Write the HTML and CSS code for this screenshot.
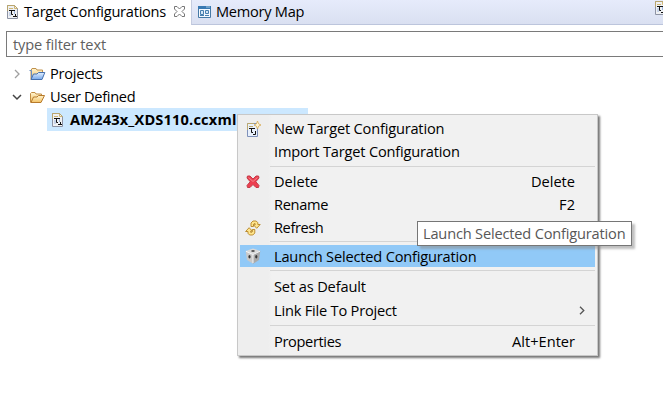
FILE: index.html
```html
<!DOCTYPE html>
<html lang="en">
<head>
<meta charset="utf-8">
<title>Target Configurations</title>
<link rel="stylesheet" href="styles.css">
</head>
<body>
<svg width="0" height="0" class="defs" aria-hidden="true">
  <defs>
    <linearGradient id="gold" x1="0" y1="0" x2="0" y2="1"><stop offset="0" stop-color="#fff3cf"/><stop offset="1" stop-color="#f3c264"/></linearGradient>
    <linearGradient id="blue" x1="0" y1="0" x2="0" y2="1"><stop offset="0" stop-color="#e4f1ff"/><stop offset="1" stop-color="#78a9ec"/></linearGradient>
    <symbol id="config" viewBox="0 0 12 16">
      <path d="M.5 1.5H7.5L10.5 4.5V14.5H.5Z" fill="#eef0f3" stroke="#8d93a4"/>
      <path d="M.5 7V1.5H7.5L10.5 4.5" fill="none" stroke="#b9a56c"/>
      <path d="M2 4.5H6M7.5 2V4.5H10" fill="none" stroke="#d0b775"/>
      <path d="M2 6.5H8M4.5 6V10.5H6M6 12.5H8.5V10M8 12.5H10" fill="none" stroke="#111"/>
      <path d="M3 8V12M7.5 7V10" stroke="#9eb6df"/>
    </symbol>
  </defs>
</svg>
<main class="view">
  <header class="tabs">
    <div class="tab active">
      <svg class="doc" width="12" height="16"><use href="#config"/></svg>
      <span class="label l-target">Target Configurations</span>
      <svg class="close" width="11" height="11" viewBox="0 0 11 11"><path d="M.5.5H3L5.5 3 8 .5H10.5V3L8 5.5 10.5 8V10.5H8L5.5 8 3 10.5H.5V8L3 5.5.5 3Z" fill="#fff" stroke="#777"/></svg>
    </div>
    <div class="tab inactive">
      <svg class="map" width="13" height="12" viewBox="0 0 13 12"><path d="M.5.5H12.5V11.5H.5Z" fill="#f5f9ff" stroke="#467aa6"/><path d="M0 1.5H13" stroke="#3979b2" stroke-width="3"/><path d="M8 1H12" stroke="#a9c9e2"/><path d="M2.5 4.5H5.5V8.5H2.5ZM7.5 4.5H10.5V7.5H7.5ZM2 9.5H6M7 9.5H11" fill="#d6e6f5" stroke="#477faf"/></svg>
      <span class="label l-memory">Memory Map</span>
      <svg class="doc end" width="12" height="16"><use href="#config"/></svg>
    </div>
  </header>
  <div class="filter"><span class="l-filter">type filter text</span></div>
  <section class="tree">
    <div class="row">
      <svg class="arrow" width="12" height="10" viewBox="0 0 12 10"><path d="M4 1 8 5 4 9" fill="none" stroke="#a0a0a0" stroke-width="1.3"/></svg>
      <svg class="folder" width="17" height="14" viewBox="0 0 17 14"><path d="M2 12.5V3.5L3 1.5H7L8 3H13.5V7" fill="url(#gold)" stroke="#bf914c"/><path d="M.5 3.5H2.5V11" fill="none" stroke="#6a8dbf"/><path d="M2 12.5 4.5 7H8L9.5 5.5H15.8L13 12.5Z" fill="url(#blue)" stroke="#4670ae"/></svg>
      <span class="l-projects">Projects</span>
    </div>
    <div class="row">
      <svg class="arrow" width="12" height="10" viewBox="0 0 12 10"><path d="M2 3 6 7 10 3" fill="none" stroke="#444" stroke-width="1.5"/></svg>
      <svg class="folder" width="17" height="14" viewBox="0 0 17 14"><path d="M1.5 12.5V3.5L2.5 2.5H6L7 4H12.5V7" fill="url(#gold)" stroke="#c28d43"/><path d="M2 12.5 4.5 7H8L9.5 5.5H15.5L12 12.5Z" fill="url(#gold)" stroke="#b77a2b"/></svg>
      <span class="l-user">User Defined</span>
    </div>
    <div class="row selected">
      <svg class="doc" width="12" height="16"><use href="#config"/></svg>
      <span class="l-file">AM243x_XDS110.ccxml</span>
    </div>
  </section>
</main>
<nav class="menu">
  <div class="item"><svg class="icon" width="16" height="16" viewBox="0 0 16 16"><path d="M2.5 2.5H12.5V15.5H2.5Z" fill="#e8f0fc" stroke="#7e91ba"/><path d="M2.5 9V2.5H9M4 5.5H8" fill="none" stroke="#bca96f"/><path d="M4 7.5H10M6.5 7V11.5H8M8 13.5H10.5V10" fill="none" stroke="#111"/><path d="M12.5 0 13.6 2.9 16 4 13.6 5.1 12.5 8 11.4 5.1 9 4 11.4 2.9Z" fill="#fff6d7" stroke="#d5a850" stroke-width=".8"/></svg><span class="l-new">New Target Configuration</span></div>
  <div class="item"><span class="l-new">Import Target Configuration</span></div>
  <div class="sep"></div>
  <div class="item"><svg class="icon" width="16" height="16" viewBox="0 0 16 16"><path d="M2 4 2.5 2H5L8 5 11 2H13.5L14 4 10.8 7.7 14 11.5 13.5 13.5H11L8 10.5 5 13.5H2.5L2 11.5 5.2 7.7Z" fill="#ed3f50" stroke="#c43c49"/><path d="M3.5 3.5 8 7.5 12.5 3.5" fill="none" stroke="#f2868b"/></svg><span>Delete</span><span class="key">Delete</span></div>
  <div class="item"><span class="l-rename">Rename</span><span class="key">F2</span></div>
  <div class="item"><svg class="icon" width="16" height="16" viewBox="0 0 16 16"><g id="turn"><path d="M6 6.5V3L8 1H11.2L12.8 2.7V4.5H15.2L11.7 8.3 8.4 4.8H10.2V3.7H9L8.5 4.5V6.5Z" fill="#ffe58d" stroke="#b58425" stroke-width=".9"/></g><use href="#turn" transform="rotate(180 7.9 8)"/></svg><span class="l-refresh">Refresh</span></div>
  <div class="sep tight"></div>
  <div class="item hot"><svg class="icon" width="16" height="16" viewBox="0 0 16 16"><path d="M8 .5 15.3 3 8 6.5.7 3Z" fill="#d9d9d9"/><path d="M.7 3 8 6.5V15.8L2 12Z" fill="#c9c9c9"/><path d="M8 6.5 15.3 3 14 12 8 15.8Z" fill="#aaa"/><path d="M1 3.3 8 6.5 15 3.2M8 6.5V15" fill="none" stroke="#f4f4f4"/><ellipse cx="8" cy="3" rx="1.8" ry=".9" fill="#555"/><ellipse cx="4.5" cy="8.8" rx="1.1" ry="1.7" fill="#383838"/><ellipse cx="11.3" cy="8.8" rx="1.1" ry="1.7" fill="#383838"/></svg><span class="l-new">Launch Selected Configuration</span></div>
  <div class="sep wide"></div>
  <div class="item"><span class="l-set">Set as Default</span></div>
  <div class="item link"><span class="l-link">Link File To Project</span><svg class="more" width="6" height="9" viewBox="0 0 6 9"><path d="M1 .7 4.8 4.5 1 8.3" fill="none" stroke="#555" stroke-width="1.3"/></svg></div>
  <div class="sep"></div>
  <div class="item last"><span class="l-properties">Properties</span><span class="key">Alt+Enter</span></div>
</nav>
<div class="tooltip"><span class="l-new">Launch Selected Configuration</span></div>
</body>
</html>
```
FILE: styles.css
```css
* { box-sizing: border-box; }
body { margin: 0; width: 663px; height: 406px; overflow: hidden; position: relative; background: #fff; color: #000; font: 14.6px/23px "Open Sans", "Noto Sans", sans-serif; white-space: nowrap; }
svg { display: block; flex: none; }
.defs { position: absolute; }
.tabs { display: flex; height: 25px; }
.tab { display: flex; align-items: center; height: 25px; }
.active { width: 191px; padding: 0 0 2px 7px; }
.active .label { width: 142px; margin-left: 5px; }
.close { margin-left: 8px; }
.inactive { flex: 1; padding: 0 0 1px 6px; background: linear-gradient(#e6ebfb, #dae0f1); border-left: 1px solid #c5cce0; border-bottom: 1px solid #bcc5dc; }
.map { margin-right: 5px; }
.end { margin: -7px -4px 0 auto; }
.filter { height: 26px; margin: 6px -2px 0 6px; padding-left: 6px; border: 1px solid #7a7a7a; line-height: 24px; color: #606060; }
.tree { padding-top: 5px; }
.row { display: flex; align-items: center; height: 23px; padding-left: 11px; }
.folder { margin: 0 4px 0 6px; }
.selected { width: 261px; margin-left: 47px; padding-left: 5px; background: #cce8ff; font-weight: 700; }
.selected .doc { margin-right: 6px; }
.menu { position: absolute; left: 237px; top: 114px; width: 361px; height: 242px; padding: 2px; border: 1px solid #c8c8c8; background: linear-gradient(90deg, #eee 0 30px, #f1f1f1 34px); box-shadow: 2px 2px 2px #777; }
.item { display: flex; align-items: center; height: 23px; padding: 0 20px 0 34px; }
.icon { margin-left: -29px; margin-right: 13px; }
.key { margin-left: auto; }
.sep { height: 7px; padding-top: 3px; margin-left: 30px; }
.sep::before { content: ""; display: block; height: 1px; background: #d4d4d4; }
.sep.tight { height: 6px; padding-top: 2px; }
.sep.wide { height: 8px; }
.hot { height: 22px; background: #91c9f7; }
.link { height: 24px; }
.last { padding-top: 1px; }
.more { margin: 0 -10px 0 auto; }
.tooltip { position: absolute; left: 417px; top: 221px; width: 215px; height: 25px; padding-left: 5px; border: 1px solid #767676; background: #fff; color: #575757; box-shadow: 3px 3px 2px #8888; }

.l-target { letter-spacing: -.25px; }
.l-memory { letter-spacing: -.27px; }
.l-filter { letter-spacing: -.13px; }
.l-projects { letter-spacing: -.25px; }
.l-user { letter-spacing: -.3px; }
.l-file { letter-spacing: .17px; }
.l-new { letter-spacing: -.18px; }
.l-rename { letter-spacing: -.3px; }
.l-refresh { letter-spacing: -.4px; }
.l-set { letter-spacing: -.13px; }
.l-link { letter-spacing: -.2px; }
.l-properties { letter-spacing: -.35px; }
```
